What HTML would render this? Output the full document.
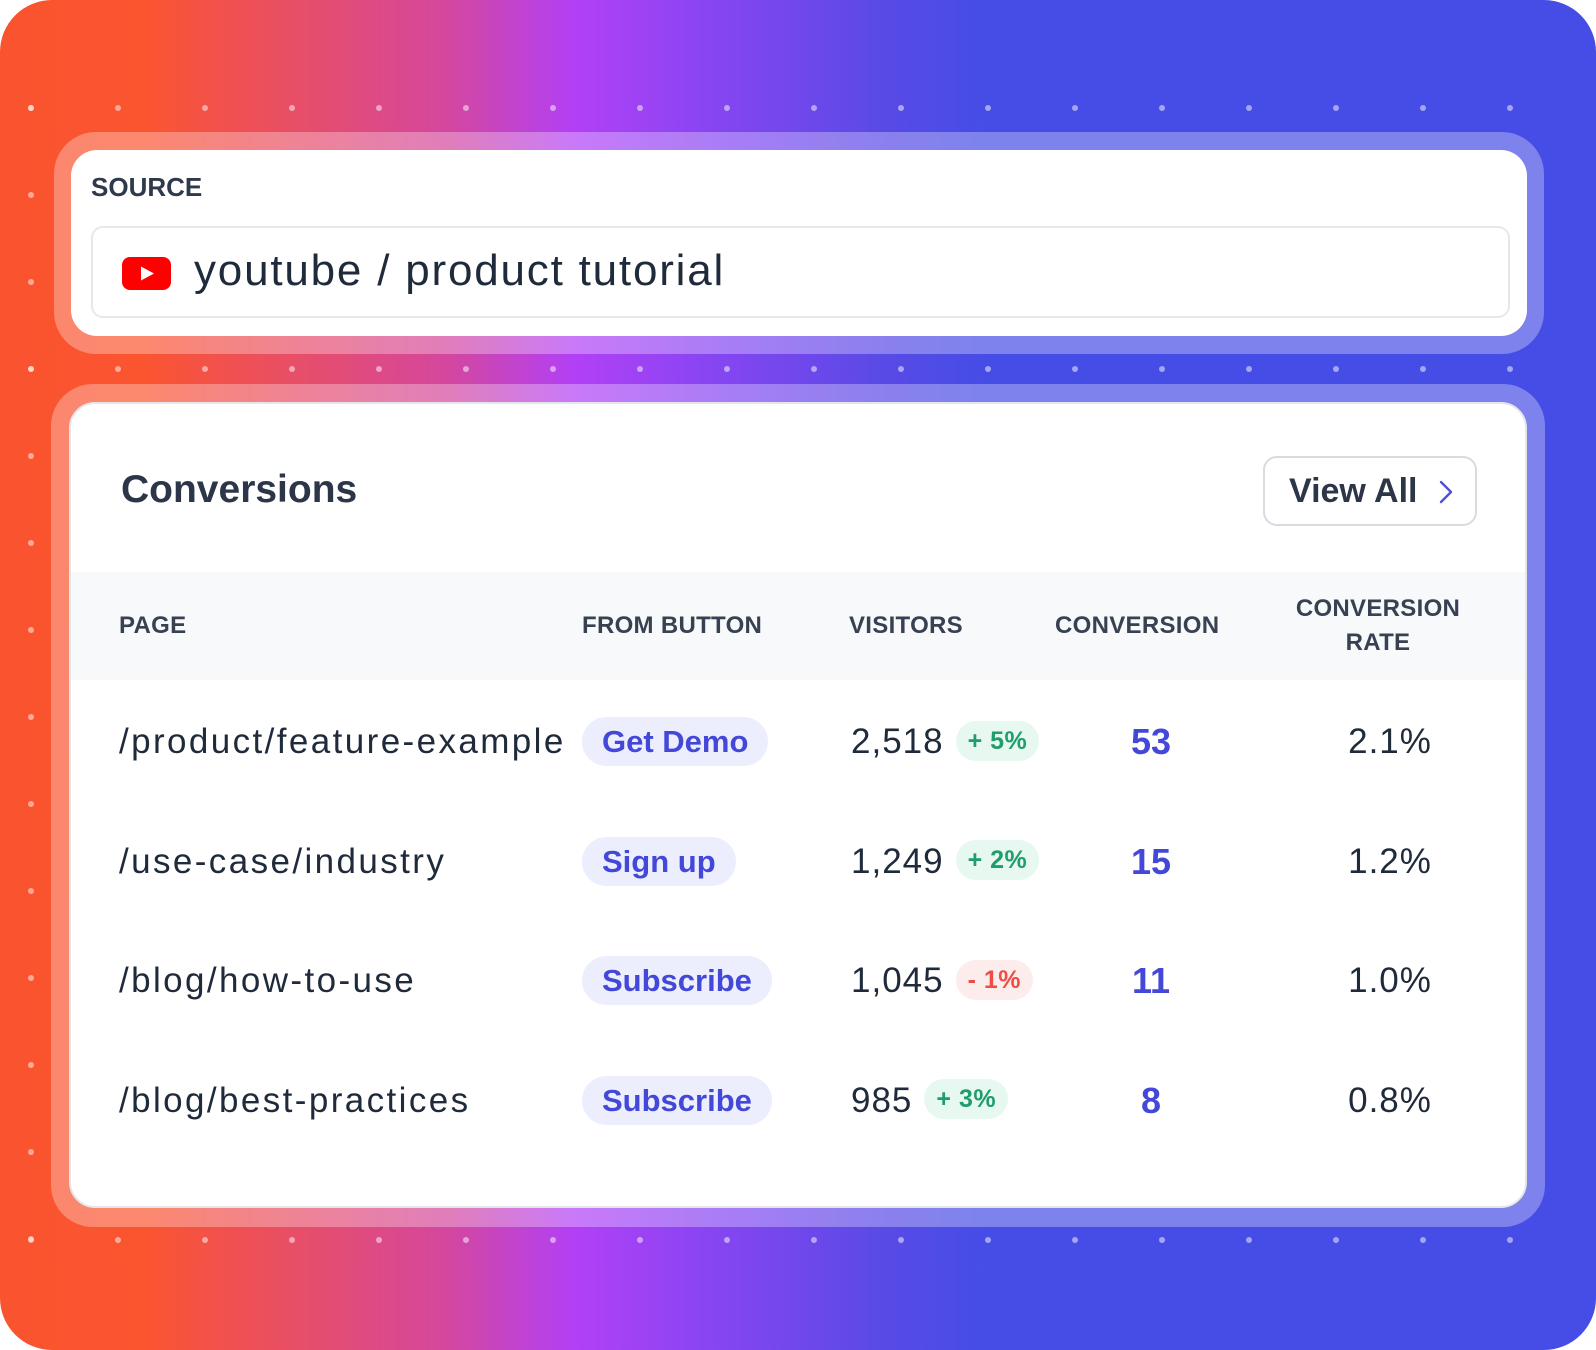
<!DOCTYPE html>
<html><head><meta charset="utf-8"><style>
*{margin:0;padding:0;box-sizing:border-box}
body{width:1596px;height:1350px;overflow:hidden;background:#fff;font-family:"Liberation Sans",Arial,sans-serif;color:#1f2a3a}
.bg{position:absolute;left:0;top:0;width:1596px;height:1350px;border-radius:52px;overflow:hidden;
background:linear-gradient(90deg,#f9542f 0%,#fb5530 9%,#d4479e 28%,#b240f6 36%,#8a45f3 44%,#5a4ae6 55%,#454de6 62%,#454de6 100%)}
.dot{position:absolute;width:6px;height:6px;border-radius:50%;background:rgba(255,255,255,.5)}
.frame{position:absolute;background:rgba(255,255,255,.3);border-radius:42px}
.card{position:absolute;background:#fff;border-radius:26px}
.abs{position:absolute;white-space:nowrap}
.hdr{font-size:24px;font-weight:bold;color:#374151;letter-spacing:.3px}
.cell{font-size:35px;color:#1f2a3a}
.pg{letter-spacing:2.4px}
.vis{letter-spacing:1px}
.pill{position:absolute;height:49px;border-radius:25px;background:#eceefd;color:#4348d8;font-weight:bold;font-size:31px;line-height:49px;padding:0 20px}
.bd{display:inline-block;height:40px;border-radius:20px;font-size:25px;font-weight:bold;line-height:40px;padding:0 12px;vertical-align:middle;margin-left:12px;position:relative;top:-3px;letter-spacing:.5px}
.g{background:#e6f8ef;color:#1f9d6b}.r{background:#fdecec;color:#ef4c43}
.num{font-size:36px;font-weight:bold;color:#4348d8;text-align:center;width:100px}
.rate{font-size:35px;text-align:center;width:140px;letter-spacing:1px}
</style></head><body>
<div class="bg" id="bg"></div>
<div class="frame" style="left:54px;top:132px;width:1490px;height:222px"></div>
<div class="card" style="left:71px;top:150px;width:1456px;height:186px"></div>
<div class="abs" style="left:91px;top:172px;font-size:26px;font-weight:bold;color:#2e3a4c">SOURCE</div>
<div class="abs" style="left:91px;top:226px;width:1419px;height:92px;border:2px solid #e6e7ea;border-radius:12px;background:#fff"></div>
<svg class="abs" style="left:122px;top:257px" width="49" height="33" viewBox="0 0 49 33"><rect width="49" height="33" rx="8" fill="#ff0000"/><path d="M19 9.5 L32 16.5 L19 23.5Z" fill="#fff"/></svg>
<div class="abs" style="left:194px;top:246px;font-size:44px;color:#1f2a3a;letter-spacing:1.8px">youtube / product tutorial</div>

<div class="frame" style="left:51px;top:384px;width:1494px;height:843px"></div>
<div class="card" style="left:69px;top:402px;width:1458px;height:806px;border:2px solid #e4e6ea"></div>
<div class="abs" style="left:121px;top:468px;font-size:39px;font-weight:bold;color:#2c3648">Conversions</div>
<div class="abs" style="left:1263px;top:456px;width:214px;height:70px;border:2px solid #d9dbe0;border-radius:14px;background:#fff"></div>
<div class="abs" style="left:1289px;top:472px;font-size:34px;font-weight:bold;color:#2c3648">View All</div>
<svg class="abs" style="left:1438px;top:479px" width="16" height="26" viewBox="0 0 16 26"><path d="M3 3 L13 13 L3 23" fill="none" stroke="#4d52d8" stroke-width="2.4" stroke-linecap="round" stroke-linejoin="round"/></svg>
<div class="abs" style="left:71px;top:572px;width:1454px;height:108px;background:#f8f9fb"></div>
<div class="abs hdr" style="left:119px;top:612px">PAGE</div>
<div class="abs hdr" style="left:582px;top:612px">FROM BUTTON</div>
<div class="abs hdr" style="left:849px;top:612px">VISITORS</div>
<div class="abs hdr" style="left:1055px;top:612px">CONVERSION</div>
<div class="abs hdr" style="left:1278px;top:592px;width:200px;text-align:center;line-height:34px;white-space:normal">CONVERSION<br>RATE</div>
<div id="rows"></div>
<script>
var bg=document.getElementById('bg');
var xs=[];for(var i=0;i<18;i++)xs.push(30.5+i*87);
[108,369,1240].forEach(function(y){xs.forEach(function(x){var d=document.createElement('div');d.className='dot';d.style.left=(x-3)+'px';d.style.top=(y-3)+'px';bg.appendChild(d)})});
for(var j=0;j<14;j++){var y=108+j*87;var d=document.createElement('div');d.className='dot';d.style.left='27.5px';d.style.top=(y-3)+'px';bg.appendChild(d)}
var rows=[["/product/feature-example","Get Demo","2,518","+ 5%","g","53","2.1%"],
["/use-case/industry","Sign up","1,249","+ 2%","g","15","1.2%"],
["/blog/how-to-use","Subscribe","1,045","- 1%","r","11","1.0%"],
["/blog/best-practices","Subscribe","985","+ 3%","g","8","0.8%"]];
var h='';rows.forEach(function(r,i){var c=744+i*119.5;
h+='<div class="abs cell pg" style="left:119px;top:'+(c-22)+'px">'+r[0]+'</div>';
h+='<div class="pill" style="left:582px;top:'+(c-27)+'px">'+r[1]+'</div>';
h+='<div class="abs cell" style="left:851px;top:'+(c-22)+'px"><span class="vis">'+r[2]+'</span><span class="bd '+r[4]+'">'+r[3]+'</span></div>';
h+='<div class="abs num" style="left:1101px;top:'+(c-23)+'px">'+r[5]+'</div>';
h+='<div class="abs cell rate" style="left:1320px;top:'+(c-22)+'px">'+r[6]+'</div>';});
document.getElementById('rows').innerHTML=h;
</script>
</body></html>
